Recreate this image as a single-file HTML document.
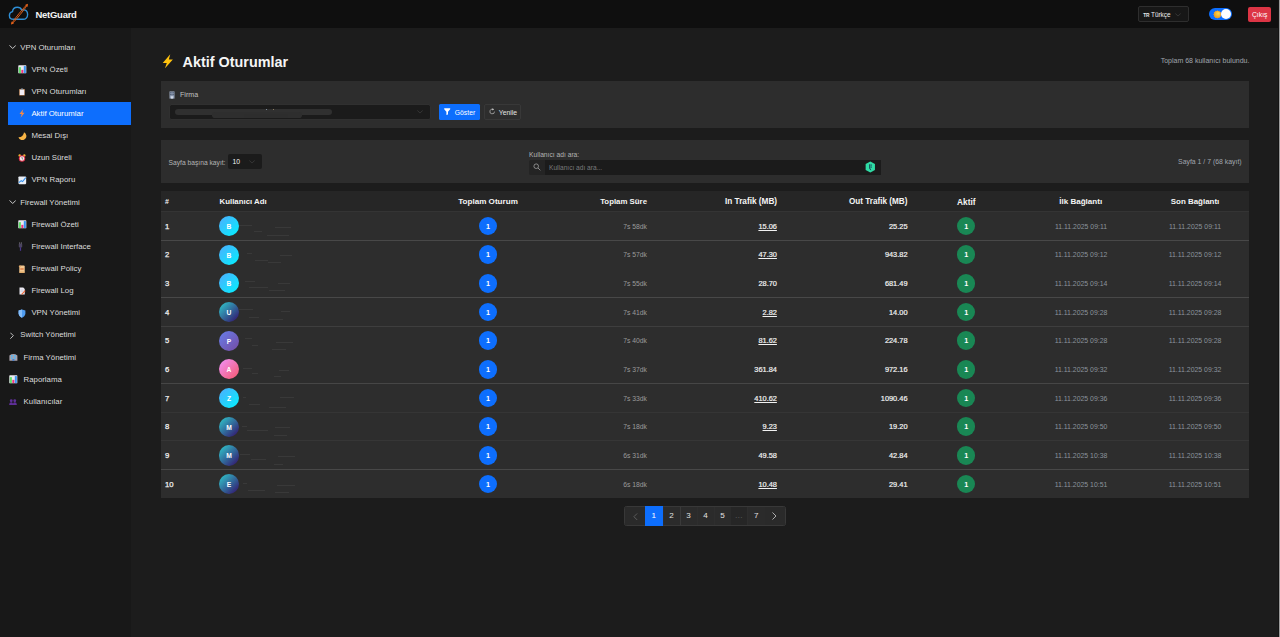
<!DOCTYPE html>
<html lang="tr"><head><meta charset="utf-8"><title>NetGuard - Aktif Oturumlar</title>
<style>
*{box-sizing:border-box;margin:0;padding:0}
html,body{width:1280px;height:637px;overflow:hidden;background:#1c1c1c;font-family:"Liberation Sans",sans-serif;color:#e6e6e6}
body{position:relative}
svg{display:block}
.abs{position:absolute}
#hdr{position:absolute;left:0;top:0;width:1280px;height:27.5px;background:#0f0f0f}
#side{position:absolute;left:0;top:27.5px;width:131px;height:610px;background:#181818}
#edge{position:absolute;left:1278px;top:0;width:1px;height:637px;background:#141414}
#edge2{position:absolute;left:1279px;top:0;width:1px;height:637px;background:#9a9a9a}
.brand{position:absolute;left:35.5px;top:8.5px;font-size:9.5px;letter-spacing:-0.27px;font-weight:700;color:#f4f4f4;line-height:12px;white-space:nowrap}
.mi{position:absolute;left:8px;width:123px;height:22px;font-size:7.82px;color:#dcdcdc;white-space:nowrap}
.mi.act{background:#0d6efd;color:#fff;height:23px}
.mi .ic{position:absolute;top:0.5px;height:22px;display:flex;align-items:center}
.mi .tx{position:absolute;top:0.6px;line-height:22px}
.card{position:absolute;left:161px;width:1088px;background:#2d2d2d}
.r{position:absolute;left:161px;width:1088px;height:20px;font-size:7px;line-height:20px;white-space:nowrap}
.r span{position:absolute;top:0.7px}
.r .n{left:4px;font-weight:400;-webkit-text-stroke:0.25px #f2f2f2;font-size:7.7px;color:#f2f2f2}
.r .av{left:57.9px;top:-0.05px;width:20.3px;height:20.2px;border-radius:50%;text-align:center;line-height:21.6px;font-size:6.7px;font-weight:700;color:#fff}
.r .bb,.r .bg{top:0.8px;width:18.4px;height:18.4px;border-radius:50%;text-align:center;line-height:20.2px;font-size:7.2px;font-weight:700;color:#fff}
.r .bb{left:317.8px;background:#0d6efd}
.r .bg{left:796px;background:#198754}
.r .du{right:602px;color:#9a9a9a;font-size:6.8px}
.r .in{right:472.1px;font-weight:400;-webkit-text-stroke:0.2px #f2f2f2;font-size:7.4px;color:#f2f2f2}
.r .in.u{text-decoration:underline;text-decoration-thickness:0.6px;text-underline-offset:0.7px}
.r .ou{right:341.5px;font-weight:400;-webkit-text-stroke:0.2px #f2f2f2;font-size:7.4px;color:#f2f2f2}
.r .d1{left:868px;width:104px;text-align:center;color:#8b939c;font-size:6.9px}
.r .d2{left:982px;width:104px;text-align:center;color:#8b939c;font-size:6.9px}
.th{position:absolute;top:192.1px;height:20px;line-height:20.6px;font-size:7.9px;font-weight:700;color:#f4f4f4;white-space:nowrap}
.bl{position:absolute;left:161px;width:1088px;height:1px}
.pg{position:absolute;top:506px;height:20px;line-height:20.6px;text-align:center;font-size:8.1px;color:#e0e0e0;background:#2b2b2b}
</style></head><body>
<div id="hdr">
 <div class="abs" style="left:6px;top:2px"><svg width="24" height="24" viewBox="0 0 24 24" style=""><g transform="translate(1.92 -0.18) scale(0.92 0.91)"><path d="M6.2 19.2 C3.2 19.2 1.6 17.2 1.6 14.9 C1.6 12.7 3.1 11.1 5 10.8 C5.3 8 7.4 6 10.2 6 C12.6 6 14.3 7.3 15.1 9.2 C15.6 9 16.2 8.9 16.8 8.9 C19.6 8.9 21.4 11 21.4 13.9 C21.4 17 19.3 19.2 16.6 19.2 Z" fill="none" stroke="#2f8fd6" stroke-width="1.5" stroke-linejoin="round"/></g><g transform="rotate(-51 13.5 12.2)"><ellipse cx="13.5" cy="12.2" rx="12.2" ry="0.75" fill="none" stroke="#e0601a" stroke-width="0.9"/><path d="M24.2 10.6 L26.9 12.2 L24.2 13.8 Z" fill="#e0601a"/><path d="M2.8 10.6 L0.1 12.2 L2.8 13.8 Z" fill="#e0601a"/></g></svg></div>
 <div class="brand">NetGuard</div>
 <div class="abs" style="left:1138px;top:6px;width:51px;height:16px;border:1px solid #2e2e2e;border-radius:2px;background:#171717"></div>
 <div class="abs" style="left:1143.2px;top:7px;line-height:17px;font-size:4.8px;color:#e8e8e8;font-weight:700">TR</div>
 <div class="abs" style="left:1151px;top:7px;line-height:16.6px;font-size:6.4px;color:#f0f0f0;white-space:nowrap">Türkçe</div>
 <div class="abs" style="left:1174.5px;top:12.5px"><svg width="6" height="4" viewBox="0 0 16 10" style=""><path d="M1.5 1.5 L8 8 L14.5 1.5" stroke="#4a4a4a" stroke-width="1.6" fill="none" stroke-linecap="round" stroke-linejoin="round"/></svg></div>
 <div class="abs" style="left:1208.85px;top:7.7px;width:23.3px;height:12.4px;border-radius:6.2px;background:#0d6efd"></div>
 <div class="abs" style="left:1213.1px;top:9.75px"><svg width="8.8" height="8.8" viewBox="0 0 20 20" style=""><defs><radialGradient id="sg" cx="0.62" cy="0.35" r="0.75"><stop offset="0" stop-color="#ffd84d"/><stop offset="1" stop-color="#e89a1e"/></radialGradient></defs><polygon points="19.60,10.00 17.34,11.97 18.31,14.80 15.37,15.37 14.80,18.31 11.97,17.34 10.00,19.60 8.03,17.34 5.20,18.31 4.63,15.37 1.69,14.80 2.66,11.97 0.40,10.00 2.66,8.03 1.69,5.20 4.63,4.63 5.20,1.69 8.03,2.66 10.00,0.40 11.97,2.66 14.80,1.69 15.37,4.63 18.31,5.20 17.34,8.03" fill="#ff9a1f"/><circle cx="10" cy="10" r="7.4" fill="url(#sg)"/></svg></div>
 <div class="abs" style="left:1221.3px;top:9px;width:10px;height:10px;border-radius:50%;background:#fff"></div>
 <div class="abs" style="left:1248px;top:6.5px;width:23.4px;height:15.5px;border-radius:2px;background:#dc3545;color:#fff;font-size:6.8px;line-height:16.6px;text-align:center">Çıkış</div>
</div>
<div id="side"></div>
<div id="edge"></div><div id="edge2"></div>
<nav>
<div class="mi" style="top:36.00px"><span class="ic" style="left:0.6px"><svg width="7.4" height="4.4" viewBox="0 0 16 10" style=""><path d="M1.5 1.5 L8 8 L14.5 1.5" stroke="#d0d0d0" stroke-width="2.2" fill="none" stroke-linecap="round" stroke-linejoin="round"/></svg></span><span class="tx" style="left:12.3px">VPN Oturumları</span></div>
<div class="mi" style="top:58.14px"><span class="ic" style="left:10px"><svg width="8.6" height="8.6" viewBox="0 0 16 16" style=""><rect x="0.5" y="0.5" width="15" height="15" rx="1.2" fill="#ece9f0"/><rect x="1.6" y="4" width="3.8" height="11" fill="#5fe06a"/><rect x="6.2" y="9" width="3.8" height="6" fill="#f0357c"/><rect x="10.8" y="2" width="3.8" height="13" fill="#3b95f2"/></svg></span><span class="tx" style="left:23.4px">VPN Özeti</span></div>
<div class="mi" style="top:80.29px"><span class="ic" style="left:10px"><svg width="8" height="8" viewBox="0 0 16 16" style=""><rect x="2.5" y="2" width="11" height="13" rx="1.2" fill="#c98a55"/><rect x="3.6" y="3.6" width="8.8" height="10.4" fill="#f1ecf3"/><rect x="5.5" y="0.8" width="5" height="3" rx="1" fill="#9aa3ad"/></svg></span><span class="tx" style="left:23.4px">VPN Oturumları</span></div>
<div class="abs" style="left:8px;top:102px;width:123px;height:23px;background:#0d6efd"></div>
<div class="mi" style="top:102.44px;color:#fff"><span class="ic" style="left:10px"><svg width="8" height="9" viewBox="0 0 16 18" style=""><path d="M10.5 0.5 L3 10 L7.4 10 L5.2 17.5 L13 7.4 L8.6 7.4 Z" fill="#ff8a3d"/></svg></span><span class="tx" style="left:23.4px">Aktif Oturumlar</span></div>
<div class="mi" style="top:124.58px"><span class="ic" style="left:10px"><svg width="9" height="8" viewBox="0 0 18 16" style=""><path d="M12 0.6 A8.2 8.2 0 1 1 0.8 10.6 A10.5 10.5 0 0 0 12 0.6 Z" fill="#f7b445"/></svg></span><span class="tx" style="left:23.4px">Mesai Dışı</span></div>
<div class="mi" style="top:146.72px"><span class="ic" style="left:10px"><svg width="8" height="8" viewBox="0 0 16 16" style=""><circle cx="3.4" cy="3" r="2.4" fill="#f2b632"/><circle cx="12.6" cy="3" r="2.4" fill="#f2b632"/><circle cx="8" cy="9" r="6.4" fill="#e0314b"/><circle cx="8" cy="9" r="4.4" fill="#f3eef0"/><path d="M8 6 V9 L10 10.6" stroke="#333" stroke-width="1.2" fill="none"/></svg></span><span class="tx" style="left:23.4px">Uzun Süreli</span></div>
<div class="mi" style="top:168.87px"><span class="ic" style="left:10px"><svg width="8.6" height="8.6" viewBox="0 0 16 16" style=""><rect x="0.8" y="0.8" width="14.4" height="14.4" rx="1.5" fill="#e9eef5"/><path d="M1.5 12.5 L6 8.5 L8.5 10.5 L14.5 3" stroke="#2f8ff0" stroke-width="1.9" fill="none"/></svg></span><span class="tx" style="left:23.4px">VPN Raporu</span></div>
<div class="mi" style="top:191.01px"><span class="ic" style="left:0.6px"><svg width="7.4" height="4.4" viewBox="0 0 16 10" style=""><path d="M1.5 1.5 L8 8 L14.5 1.5" stroke="#d0d0d0" stroke-width="2.2" fill="none" stroke-linecap="round" stroke-linejoin="round"/></svg></span><span class="tx" style="left:12.3px">Firewall Yönetimi</span></div>
<div class="mi" style="top:213.16px"><span class="ic" style="left:10px"><svg width="8.6" height="8.6" viewBox="0 0 16 16" style=""><rect x="0.5" y="0.5" width="15" height="15" rx="1.2" fill="#ece9f0"/><rect x="1.6" y="4" width="3.8" height="11" fill="#5fe06a"/><rect x="6.2" y="9" width="3.8" height="6" fill="#f0357c"/><rect x="10.8" y="2" width="3.8" height="13" fill="#3b95f2"/></svg></span><span class="tx" style="left:23.4px">Firewall Özeti</span></div>
<div class="mi" style="top:235.31px"><span class="ic" style="left:10px"><svg width="5" height="9" viewBox="0 0 10 18" style=""><rect x="2.6" y="0.5" width="1.6" height="4" fill="#77737f"/><rect x="5.8" y="0.5" width="1.6" height="4" fill="#77737f"/><rect x="1.6" y="3.6" width="6.8" height="7.4" rx="1.6" fill="#4c4560"/><rect x="3.8" y="10.6" width="2.4" height="7" fill="#4a3590"/></svg></span><span class="tx" style="left:23.4px">Firewall Interface</span></div>
<div class="mi" style="top:257.45px"><span class="ic" style="left:10px"><svg width="8" height="8.4" viewBox="0 0 16 17" style=""><rect x="2.5" y="1" width="11" height="15" rx="2" fill="#f3c790"/><rect x="4.6" y="7" width="6.8" height="2.2" fill="#d2622c"/><rect x="1.6" y="1" width="4" height="3.4" rx="1.6" fill="#e0a868"/><rect x="2.5" y="13" width="11" height="3" rx="1.5" fill="#e2ad6c"/></svg></span><span class="tx" style="left:23.4px">Firewall Policy</span></div>
<div class="mi" style="top:279.60px"><span class="ic" style="left:10px"><svg width="8" height="8" viewBox="0 0 16 16" style=""><path d="M3 1 H10.5 L13.5 4 V15 H3 Z" fill="#eceaf2"/><path d="M5 6 H11 M5 8.6 H11" stroke="#b9b4c8" stroke-width="1"/><path d="M7 13.5 L13.8 6.5 L15.2 8 L8.6 14.8 L6.6 15.2 Z" fill="#f0622d"/></svg></span><span class="tx" style="left:23.4px">Firewall Log</span></div>
<div class="mi" style="top:301.74px"><span class="ic" style="left:10px"><svg width="8" height="9" viewBox="0 0 16 18" style=""><path d="M8 0.8 L14.8 3.2 V8.5 C14.8 13 11.8 16 8 17.4 C4.2 16 1.2 13 1.2 8.5 V3.2 Z" fill="#4f9cf0"/><path d="M8 0.8 V17.4 C4.2 16 1.2 13 1.2 8.5 V3.2 Z" fill="#86bdf7"/></svg></span><span class="tx" style="left:23.4px">VPN Yönetimi</span></div>
<div class="mi" style="top:323.88px"><span class="ic" style="left:2px"><svg width="4.2" height="7.4" viewBox="0 0 10 16" style=""><path d="M1.5 1.5 L8 8 L1.5 14.5" stroke="#d0d0d0" stroke-width="2.2" fill="none" stroke-linecap="round" stroke-linejoin="round"/></svg></span><span class="tx" style="left:12.3px">Switch Yönetimi</span></div>
<div class="mi" style="top:346.03px"><span class="ic" style="left:1.2px;top:-0.4px"><svg width="8.8" height="8.2" viewBox="0 0 18 16" style=""><path d="M0.8 15.6 V4.6 Q9 -1.2 17.2 4.6 V15.6 Z" fill="#aaa2ab"/><rect x="4" y="3.6" width="3.6" height="3.6" fill="#58b6f2"/><rect x="10.4" y="3.6" width="3.6" height="3.6" fill="#58b6f2"/><rect x="4" y="8.6" width="3.6" height="3.4" fill="#58b6f2"/><rect x="10.4" y="8.6" width="3.6" height="3.4" fill="#58b6f2"/><rect x="7" y="12" width="4" height="3.6" fill="#3f7fd0"/></svg></span><span class="tx" style="left:15.6px">Firma Yönetimi</span></div>
<div class="mi" style="top:368.18px"><span class="ic" style="left:1.2px;top:0.5px"><svg width="8.6" height="8.6" viewBox="0 0 16 16" style=""><rect x="0.5" y="0.5" width="15" height="15" rx="1.2" fill="#ece9f0"/><rect x="1.6" y="4" width="3.8" height="11" fill="#5fe06a"/><rect x="6.2" y="9" width="3.8" height="6" fill="#f0357c"/><rect x="10.8" y="2" width="3.8" height="13" fill="#3b95f2"/></svg></span><span class="tx" style="left:15.6px">Raporlama</span></div>
<div class="mi" style="top:390.32px"><span class="ic" style="left:1.2px;top:0.5px"><svg width="8" height="6.2" viewBox="0 0 18 14" style=""><circle cx="5" cy="4" r="3.2" fill="#5f2f98"/><path d="M0.3 13.8 C0.3 9 2.6 7.4 5 7.4 C7.4 7.4 9.4 9 9.4 13.8 Z" fill="#5f2f98"/><circle cx="13" cy="4" r="3.2" fill="#5f2f98"/><path d="M8.6 13.8 C8.6 9 10.6 7.4 13 7.4 C15.4 7.4 17.7 9 17.7 13.8 Z" fill="#5f2f98"/></svg></span><span class="tx" style="left:15.6px">Kullanıcılar</span></div>
</nav>

<div class="abs" style="left:161.6px;top:53.9px"><svg width="11.6" height="14.6" viewBox="0 0 16 20" style=""><path d="M11.4 0.3 L1 12.3 L6.6 12.3 L4 19.8 L15 7.6 L9.4 7.6 Z" fill="#ffc20e"/></svg></div>
<h1 class="abs" style="left:182.6px;top:52.6px;font-size:14.4px;line-height:18px;font-weight:700;color:#f5f5f5;white-space:nowrap">Aktif Oturumlar</h1>
<div class="abs" style="right:30.6px;top:55.3px;font-size:7px;line-height:12px;color:#a0a6ad;white-space:nowrap">Toplam 68 kullanıcı bulundu.</div>

<div class="card" style="top:81px;height:47px"></div>
<div class="abs" style="left:169px;top:91px"><svg width="6" height="8" viewBox="0 0 12 16" style=""><rect x="1" y="0.8" width="10" height="14.4" fill="#9aa7bd"/><rect x="2.6" y="2.6" width="2.4" height="2.2" fill="#26344d"/><rect x="7" y="2.6" width="2.4" height="2.2" fill="#26344d"/><rect x="2.6" y="6.4" width="2.4" height="2.2" fill="#26344d"/><rect x="7" y="6.4" width="2.4" height="2.2" fill="#26344d"/><rect x="4.4" y="10.6" width="3.2" height="4.6" fill="#dfe6f2"/></svg></div>
<div class="abs" style="left:180px;top:89.4px;font-size:7.1px;line-height:12px;color:#c0c0c0">Firma</div>
<div class="abs" style="left:169.5px;top:104.7px;width:260.7px;height:14.6px;background:#1b1b1b;border-radius:1.5px;box-shadow:0 0 0 0.5px #343434"></div>
<div class="abs" style="left:174.6px;top:108.8px;width:157px;height:6.4px;border-radius:3.2px;background:#303030;filter:blur(.55px)"></div><div class="abs" style="left:212px;top:112.4px;width:90px;height:5.6px;border-radius:2.8px;background:#2e2e2e;filter:blur(.6px)"></div><div class="abs" style="left:244px;top:114.2px;width:44px;height:3.6px;border-radius:2px;background:#2d2d2d;filter:blur(.6px)"></div><div class="abs" style="left:266.2px;top:108.7px;width:0.9px;height:0.9px;background:#7c8a99;filter:blur(.3px)"></div><div class="abs" style="left:272.8px;top:109.1px;width:0.8px;height:0.8px;background:#8a7a5e;filter:blur(.3px)"></div>
<div class="abs" style="left:417px;top:110.4px"><svg width="6" height="4" viewBox="0 0 16 10" style=""><path d="M1.5 1.5 L8 8 L14.5 1.5" stroke="#4a4a4a" stroke-width="1.6" fill="none" stroke-linecap="round" stroke-linejoin="round"/></svg></div>
<div class="abs" style="left:439px;top:104px;width:41px;height:16px;border-radius:1.5px;background:#0d6efd"></div>
<div class="abs" style="left:444.2px;top:108.4px"><svg width="6.4" height="7.2" viewBox="0 0 16 18" style=""><path d="M0.5 0.5 H15.5 V3 L10 9.5 V16 L6 17.5 V9.5 L0.5 3 Z" fill="#fff"/></svg></div>
<div class="abs" style="left:454.8px;top:105px;line-height:16.4px;font-size:6.8px;color:#fff">Göster</div>
<div class="abs" style="left:483.7px;top:104px;width:37.7px;height:16px;border-radius:2px;border:1px solid #383838"></div>
<div class="abs" style="left:488.6px;top:108.4px"><svg width="6.4" height="6.8" viewBox="0 0 16 17" style=""><path d="M13.8 9 A5.8 5.8 0 1 1 10.6 3.6" fill="none" stroke="#e6e6e6" stroke-width="1.4"/><path d="M8.6 0.8 L12.4 3.4 L8.8 6 Z" fill="#e6e6e6"/></svg></div>
<div class="abs" style="left:498.8px;top:105px;line-height:16.4px;font-size:6.8px;color:#e4e4e4">Yenile</div>

<div class="card" style="top:140px;height:43px"></div>
<div class="abs" style="left:168.6px;top:156.6px;font-size:6.7px;line-height:12px;color:#b4b4b4;white-space:nowrap">Sayfa başına kayıt:</div>
<div class="abs" style="left:228px;top:154px;width:34.4px;height:15px;border-radius:2px;background:#1b1b1b"></div>
<div class="abs" style="left:232.6px;top:154.4px;line-height:15.6px;font-size:6.8px;color:#f4f4f4">10</div>
<div class="abs" style="left:248.6px;top:160.1px"><svg width="6" height="4" viewBox="0 0 16 10" style=""><path d="M1.5 1.5 L8 8 L14.5 1.5" stroke="#4a4a4a" stroke-width="1.6" fill="none" stroke-linecap="round" stroke-linejoin="round"/></svg></div>
<div class="abs" style="left:529px;top:149.3px;font-size:6.7px;line-height:12px;color:#b4b4b4;white-space:nowrap">Kullanıcı adı ara:</div>
<div class="abs" style="left:529.4px;top:160px;width:15.2px;height:15px;background:#242424;border-radius:1.5px 0 0 1.5px"></div>
<div class="abs" style="left:544.6px;top:160px;width:336.4px;height:15px;background:#1b1b1b"></div>
<div class="abs" style="left:532.8px;top:163.2px"><svg width="8" height="8" viewBox="0 0 16 16" style=""><circle cx="6.4" cy="6.4" r="4.6" fill="none" stroke="#a8a8a8" stroke-width="1.5"/><path d="M10 10 L14.6 14.6" stroke="#a8a8a8" stroke-width="1.6"/></svg></div>
<div class="abs" style="left:549px;top:162.1px;font-size:6.6px;line-height:12px;color:#7a7a7a;white-space:nowrap">Kullanıcı adı ara...</div>
<div class="abs" style="left:865px;top:161.2px"><svg width="10.6" height="12" viewBox="0 0 21 24" style=""><path d="M10.5 0.8 L19.8 6.2 V17.8 L10.5 23.2 L1.2 17.8 V6.2 Z" fill="#2fdca5"/><path d="M9.5 6.5 V14.5 C9.5 17 11.5 17.5 12 18" stroke="#124" stroke-width="2" fill="none"/><circle cx="12.6" cy="8" r="1.2" fill="#124"/><circle cx="12.6" cy="12" r="1.2" fill="#124"/></svg></div>
<div class="abs" style="right:38.4px;top:156.3px;font-size:6.9px;line-height:12px;color:#a0a6ad;white-space:nowrap">Sayfa 1 / 7 (68 kayıt)</div>

<div class="abs" style="left:161px;top:191px;width:1088px;height:20px;background:#262626"></div>
<div class="card" style="top:211px;height:287px"></div>
<div class="bl" style="top:211px;background:#343434"></div><div class="bl" style="top:240px;background:#484848"></div><div class="bl" style="top:297px;background:#484848"></div><div class="bl" style="top:326px;background:#3e3e3e"></div><div class="bl" style="top:383px;background:#464646"></div><div class="bl" style="top:412px;background:#353535"></div><div class="bl" style="top:440px;background:#363636"></div><div class="bl" style="top:469px;background:#484848"></div>
<div class="th" style="left:165px;font-size:7px">#</div>
<div class="th" style="left:219.6px;font-size:7.82px">Kullanıcı Adı</div>
<div class="th" style="left:427px;width:122px;text-align:center;font-size:8.1px">Toplam Oturum</div>
<div class="th" style="right:633px;font-size:7.84px">Toplam Süre</div>
<div class="th" style="right:502.9px;font-size:8.24px">In Trafik (MB)</div>
<div class="th" style="right:372.6px;font-size:8.16px">Out Trafik (MB)</div>
<div class="th" style="left:936px;width:60.6px;text-align:center;font-size:8.3px">Aktif</div>
<div class="th" style="left:1020px;width:121.4px;text-align:center;font-size:8.06px">İlk Bağlantı</div>
<div class="th" style="left:1134px;width:122px;text-align:center;font-size:7.95px">Son Bağlantı</div>
<div class="abs" style="left:239px;top:225.0px;width:13px;height:0.8px;background:#393939"></div><div class="abs" style="left:275px;top:227.0px;width:16px;height:0.8px;background:#393939"></div><div class="abs" style="left:254px;top:230.5px;width:8px;height:0.8px;background:#393939"></div><div class="abs" style="left:267px;top:234.5px;width:22px;height:0.8px;background:#393939"></div>
<div class="r" style="top:216.00px">
<span class="n">1</span><span class="av" style="background:linear-gradient(135deg,#4facfe 0%,#00f2fe 100%)">B</span><span class="bb">1</span><span class="du">7s 58dk</span><span class="in u">15.06</span><span class="ou">25.25</span><span class="bg">1</span><span class="d1">11.11.2025 09:11</span><span class="d2">11.11.2025 09:11</span>
</div>
<div class="abs" style="left:247px;top:253.2px;width:5px;height:0.8px;background:#393939"></div><div class="abs" style="left:280px;top:254.7px;width:12px;height:0.8px;background:#393939"></div><div class="abs" style="left:255px;top:259.7px;width:13px;height:0.8px;background:#393939"></div><div class="abs" style="left:268px;top:262.2px;width:13px;height:0.8px;background:#393939"></div>
<div class="r" style="top:244.67px">
<span class="n">2</span><span class="av" style="background:linear-gradient(135deg,#4facfe 0%,#00f2fe 100%)">B</span><span class="bb">1</span><span class="du">7s 57dk</span><span class="in u">47.30</span><span class="ou">943.82</span><span class="bg">1</span><span class="d1">11.11.2025 09:12</span><span class="d2">11.11.2025 09:12</span>
</div>
<div class="abs" style="left:245px;top:281.3px;width:10px;height:0.8px;background:#393939"></div><div class="abs" style="left:278px;top:283.3px;width:12px;height:0.8px;background:#393939"></div><div class="abs" style="left:249px;top:286.8px;width:19px;height:0.8px;background:#393939"></div><div class="abs" style="left:269px;top:289.8px;width:16px;height:0.8px;background:#393939"></div>
<div class="r" style="top:273.34px">
<span class="n">3</span><span class="av" style="background:linear-gradient(135deg,#4facfe 0%,#00f2fe 100%)">B</span><span class="bb">1</span><span class="du">7s 55dk</span><span class="in">28.70</span><span class="ou">681.49</span><span class="bg">1</span><span class="d1">11.11.2025 09:14</span><span class="d2">11.11.2025 09:14</span>
</div>
<div class="abs" style="left:239px;top:309.0px;width:14px;height:0.8px;background:#393939"></div><div class="abs" style="left:281px;top:311.0px;width:9px;height:0.8px;background:#393939"></div><div class="abs" style="left:249px;top:316.5px;width:10px;height:0.8px;background:#393939"></div><div class="abs" style="left:269px;top:318.5px;width:14px;height:0.8px;background:#393939"></div>
<div class="r" style="top:302.01px">
<span class="n">4</span><span class="av" style="background:linear-gradient(135deg,#30cfd0 0%,#330867 100%)">U</span><span class="bb">1</span><span class="du">7s 41dk</span><span class="in u">2.82</span><span class="ou">14.00</span><span class="bg">1</span><span class="d1">11.11.2025 09:28</span><span class="d2">11.11.2025 09:28</span>
</div>
<div class="abs" style="left:245px;top:337.7px;width:7px;height:0.8px;background:#393939"></div><div class="abs" style="left:276px;top:341.7px;width:17px;height:0.8px;background:#393939"></div><div class="abs" style="left:252px;top:345.2px;width:6px;height:0.8px;background:#393939"></div><div class="abs" style="left:272px;top:348.7px;width:14px;height:0.8px;background:#393939"></div>
<div class="r" style="top:330.68px">
<span class="n">5</span><span class="av" style="background:linear-gradient(135deg,#667eea 0%,#764ba2 100%)">P</span><span class="bb">1</span><span class="du">7s 40dk</span><span class="in u">81.62</span><span class="ou">224.78</span><span class="bg">1</span><span class="d1">11.11.2025 09:28</span><span class="d2">11.11.2025 09:28</span>
</div>
<div class="abs" style="left:243px;top:368.4px;width:9px;height:0.8px;background:#393939"></div><div class="abs" style="left:279px;top:369.9px;width:10px;height:0.8px;background:#393939"></div><div class="abs" style="left:252px;top:372.9px;width:6px;height:0.8px;background:#393939"></div><div class="abs" style="left:274px;top:375.9px;width:7px;height:0.8px;background:#393939"></div>
<div class="r" style="top:359.35px">
<span class="n">6</span><span class="av" style="background:linear-gradient(135deg,#f093fb 0%,#f5576c 100%)">A</span><span class="bb">1</span><span class="du">7s 37dk</span><span class="in">361.84</span><span class="ou">972.16</span><span class="bg">1</span><span class="d1">11.11.2025 09:32</span><span class="d2">11.11.2025 09:32</span>
</div>
<div class="abs" style="left:243px;top:397.0px;width:3px;height:0.8px;background:#393939"></div><div class="abs" style="left:280px;top:397.0px;width:14px;height:0.8px;background:#393939"></div><div class="abs" style="left:249px;top:403.5px;width:11px;height:0.8px;background:#393939"></div><div class="abs" style="left:269px;top:406.5px;width:17px;height:0.8px;background:#393939"></div>
<div class="r" style="top:388.02px">
<span class="n">7</span><span class="av" style="background:linear-gradient(135deg,#4facfe 0%,#00f2fe 100%)">Z</span><span class="bb">1</span><span class="du">7s 33dk</span><span class="in u">410.62</span><span class="ou">1090.46</span><span class="bg">1</span><span class="d1">11.11.2025 09:36</span><span class="d2">11.11.2025 09:36</span>
</div>
<div class="abs" style="left:242px;top:425.7px;width:5px;height:0.8px;background:#393939"></div><div class="abs" style="left:275px;top:427.2px;width:15px;height:0.8px;background:#393939"></div><div class="abs" style="left:247px;top:430.2px;width:21px;height:0.8px;background:#393939"></div><div class="abs" style="left:274px;top:435.2px;width:13px;height:0.8px;background:#393939"></div>
<div class="r" style="top:416.69px">
<span class="n">8</span><span class="av" style="background:linear-gradient(135deg,#30cfd0 0%,#330867 100%)">M</span><span class="bb">1</span><span class="du">7s 18dk</span><span class="in u">9.23</span><span class="ou">19.20</span><span class="bg">1</span><span class="d1">11.11.2025 09:50</span><span class="d2">11.11.2025 09:50</span>
</div>
<div class="abs" style="left:240px;top:454.4px;width:10px;height:0.8px;background:#393939"></div><div class="abs" style="left:278px;top:455.9px;width:17px;height:0.8px;background:#393939"></div><div class="abs" style="left:251px;top:458.9px;width:15px;height:0.8px;background:#393939"></div><div class="abs" style="left:274px;top:463.9px;width:9px;height:0.8px;background:#393939"></div>
<div class="r" style="top:445.36px">
<span class="n">9</span><span class="av" style="background:linear-gradient(135deg,#30cfd0 0%,#330867 100%)">M</span><span class="bb">1</span><span class="du">6s 31dk</span><span class="in">49.58</span><span class="ou">42.84</span><span class="bg">1</span><span class="d1">11.11.2025 10:38</span><span class="d2">11.11.2025 10:38</span>
</div>
<div class="abs" style="left:243px;top:483.0px;width:4px;height:0.8px;background:#393939"></div><div class="abs" style="left:277px;top:484.5px;width:18px;height:0.8px;background:#393939"></div><div class="abs" style="left:248px;top:489.5px;width:17px;height:0.8px;background:#393939"></div><div class="abs" style="left:275px;top:491.5px;width:14px;height:0.8px;background:#393939"></div>
<div class="r" style="top:474.03px">
<span class="n">10</span><span class="av" style="background:linear-gradient(135deg,#30cfd0 0%,#330867 100%)">E</span><span class="bb">1</span><span class="du">6s 18dk</span><span class="in u">10.48</span><span class="ou">29.41</span><span class="bg">1</span><span class="d1">11.11.2025 10:51</span><span class="d2">11.11.2025 10:51</span>
</div>

<div class="abs" style="left:624px;top:506px;width:162px;height:20px;border-radius:2.5px;background:#2b2b2b;border:1px solid #383838"></div>
<div class="pg" style="left:625px;top:507px;height:18px;width:20px;background:#2a2a2a"><div class="abs" style="left:8px;top:5.6px"><svg width="4.6" height="7.4" viewBox="0 0 10 16" style=""><path d="M8.5 1.5 L2 8 L8.5 14.5" stroke="#6e6e6e" stroke-width="1.6" fill="none" stroke-linecap="round" stroke-linejoin="round"/></svg></div></div>
<div class="pg" style="left:645px;width:17.5px;background:#0d6efd;color:#fff">1</div>
<div class="pg" style="left:662.5px;top:507px;height:18px;line-height:18.6px;width:17.0px;border-left:1px solid #2e2e2e">2</div>
<div class="pg" style="left:679.5px;top:507px;height:18px;line-height:18.6px;width:17.0px;border-left:1px solid #3a3a3a">3</div>
<div class="pg" style="left:696.5px;top:507px;height:18px;line-height:18.6px;width:17.0px;border-left:1px solid #2e2e2e">4</div>
<div class="pg" style="left:713.5px;top:507px;height:18px;line-height:18.6px;width:17.0px;border-left:1px solid #2e2e2e">5</div>
<div class="pg" style="left:730.5px;top:507px;height:18px;line-height:18px;width:16.5px;background:#262626;color:#666">…</div>
<div class="pg" style="left:747px;top:507px;height:18px;line-height:18.6px;width:17.5px;border-left:1px solid #2e2e2e">7</div>
<div class="pg" style="left:764.5px;top:507px;height:18px;width:20.5px;background:#2a2a2a"><div class="abs" style="left:7.6px;top:5px"><svg width="5" height="8" viewBox="0 0 10 16" style=""><path d="M1.5 1.5 L8 8 L1.5 14.5" stroke="#d0d0d0" stroke-width="1.6" fill="none" stroke-linecap="round" stroke-linejoin="round"/></svg></div></div>
</body></html>
